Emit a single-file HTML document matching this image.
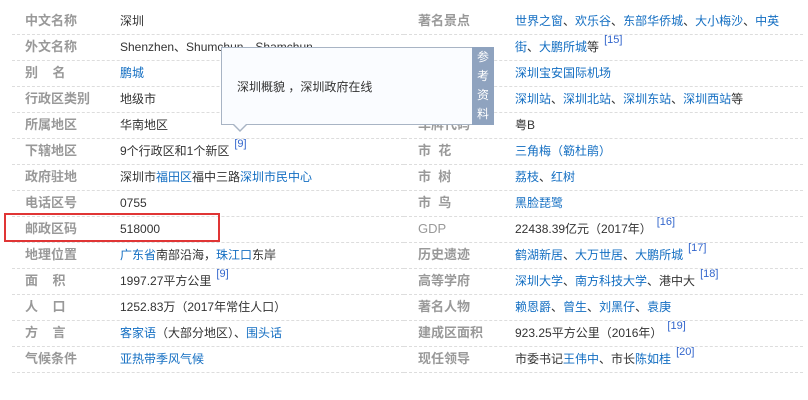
<!DOCTYPE html>
<html><head><meta charset="utf-8"><style>
body{margin:0;width:808px;height:400px;background:#fff;position:relative;overflow:hidden;font-family:"Liberation Sans","Noto Sans CJK SC",sans-serif;font-size:12px;color:#333}
.r{position:absolute;height:26px;line-height:26px;border-bottom:1px dashed #ddd;white-space:nowrap}
.l{left:12px;width:392px}
.rt{left:404px;width:399px}
.k{position:absolute;top:0;color:#999;font-weight:bold;font-size:13px}
.l .k{left:13px}.rt .k{left:14px}
.v{position:absolute;top:0}
.l .v{left:108px}.rt .v{left:111px}
a{color:#136ec2;text-decoration:none}
sup{color:#3366cc;font-size:11px;vertical-align:baseline;line-height:0;position:relative;top:-8px;margin-left:5px}
.tip{position:absolute;left:221px;top:47px;width:250px;height:76px;background:#fafcff;border:1px solid #a8b4c4;}
.tab{position:absolute;left:472px;top:47px;width:22px;height:78px;background:#8fa3bf;color:#fff;font-size:12px;line-height:19px;text-align:center;padding-top:1px;box-sizing:border-box}
.arr{position:absolute;left:232px;top:124px;width:0;height:0;border-left:8px solid transparent;border-right:8px solid transparent;border-top:8px solid #a8b4c4}
.arr2{position:absolute;left:233px;top:123px;width:0;height:0;border-left:7px solid transparent;border-right:7px solid transparent;border-top:7px solid #fafcff}
.red{position:absolute;left:4px;top:213px;width:212px;height:25px;border:2px solid #e03535}
</style></head><body>
<div class="r l" style="top:8px"><span class="k">中文名称</span><span class="v">深圳</span></div>
<div class="r l" style="top:34px"><span class="k">外文名称</span><span class="v">Shenzhen、Shumchun、Shamchun</span></div>
<div class="r l" style="top:60px"><span class="k">别&nbsp;&nbsp;&nbsp;&nbsp;名</span><span class="v"><a>鹏城</a></span></div>
<div class="r l" style="top:86px"><span class="k">行政区类别</span><span class="v">地级市</span></div>
<div class="r l" style="top:112px"><span class="k">所属地区</span><span class="v">华南地区</span></div>
<div class="r l" style="top:138px"><span class="k">下辖地区</span><span class="v">9个行政区和1个新区<sup>[9]</sup></span></div>
<div class="r l" style="top:164px"><span class="k">政府驻地</span><span class="v">深圳市<a>福田区</a>福中三路<a>深圳市民中心</a></span></div>
<div class="r l" style="top:190px"><span class="k">电话区号</span><span class="v">0755</span></div>
<div class="r l" style="top:216px"><span class="k">邮政区码</span><span class="v">518000</span></div>
<div class="r l" style="top:242px"><span class="k">地理位置</span><span class="v"><a>广东省</a>南部沿海，<a>珠江口</a>东岸</span></div>
<div class="r l" style="top:268px"><span class="k">面&nbsp;&nbsp;&nbsp;&nbsp;积</span><span class="v">1997.27平方公里<sup>[9]</sup></span></div>
<div class="r l" style="top:294px"><span class="k">人&nbsp;&nbsp;&nbsp;&nbsp;口</span><span class="v">1252.83万（2017年常住人口）</span></div>
<div class="r l" style="top:320px"><span class="k">方&nbsp;&nbsp;&nbsp;&nbsp;言</span><span class="v"><a>客家语</a>（大部分地区）、<a>围头话</a></span></div>
<div class="r l" style="top:346px"><span class="k">气候条件</span><span class="v"><a>亚热带季风气候</a></span></div>

<div class="r rt" style="top:8px"><span class="k">著名景点</span><span class="v"><a>世界之窗</a>、<a>欢乐谷</a>、<a>东部华侨城</a>、<a>大小梅沙</a>、<a>中英</a></span></div>
<div class="r rt" style="top:34px"><span class="v"><a>街</a>、<a>大鹏所城</a>等<sup>[15]</sup></span></div>
<div class="r rt" style="top:60px"><span class="k">机&nbsp;&nbsp;&nbsp;&nbsp;场</span><span class="v"><a>深圳宝安国际机场</a></span></div>
<div class="r rt" style="top:86px"><span class="k">火车站</span><span class="v"><a>深圳站</a>、<a>深圳北站</a>、<a>深圳东站</a>、<a>深圳西站</a>等</span></div>
<div class="r rt" style="top:112px"><span class="k">车牌代码</span><span class="v">粤B</span></div>
<div class="r rt" style="top:138px"><span class="k">市&nbsp;&nbsp;花</span><span class="v"><a>三角梅（簕杜鹃）</a></span></div>
<div class="r rt" style="top:164px"><span class="k">市&nbsp;&nbsp;树</span><span class="v"><a>荔枝</a>、<a>红树</a></span></div>
<div class="r rt" style="top:190px"><span class="k">市&nbsp;&nbsp;鸟</span><span class="v"><a>黑脸琵鹭</a></span></div>
<div class="r rt" style="top:216px"><span class="k" style="font-weight:normal">GDP</span><span class="v">22438.39亿元（2017年）<sup>[16]</sup></span></div>
<div class="r rt" style="top:242px"><span class="k">历史遗迹</span><span class="v"><a>鹤湖新居</a>、<a>大万世居</a>、<a>大鹏所城</a><sup>[17]</sup></span></div>
<div class="r rt" style="top:268px"><span class="k">高等学府</span><span class="v"><a>深圳大学</a>、<a>南方科技大学</a>、港中大<sup>[18]</sup></span></div>
<div class="r rt" style="top:294px"><span class="k">著名人物</span><span class="v"><a>赖恩爵</a>、<a>曾生</a>、<a>刘黑仔</a>、<a>袁庚</a></span></div>
<div class="r rt" style="top:320px"><span class="k">建成区面积</span><span class="v">923.25平方公里（2016年）<sup>[19]</sup></span></div>
<div class="r rt" style="top:346px"><span class="k">现任领导</span><span class="v">市委书记<a>王伟中</a>、市长<a>陈如桂</a><sup>[20]</sup></span></div>

<div class="tip"><div style="position:absolute;left:15px;top:30px;color:#333">深圳概貌 ，深圳政府在线</div></div>
<div class="arr"></div><div class="arr2"></div>
<div class="tab">参<br>考<br>资<br>料</div>
<div class="red"></div>
</body></html>
